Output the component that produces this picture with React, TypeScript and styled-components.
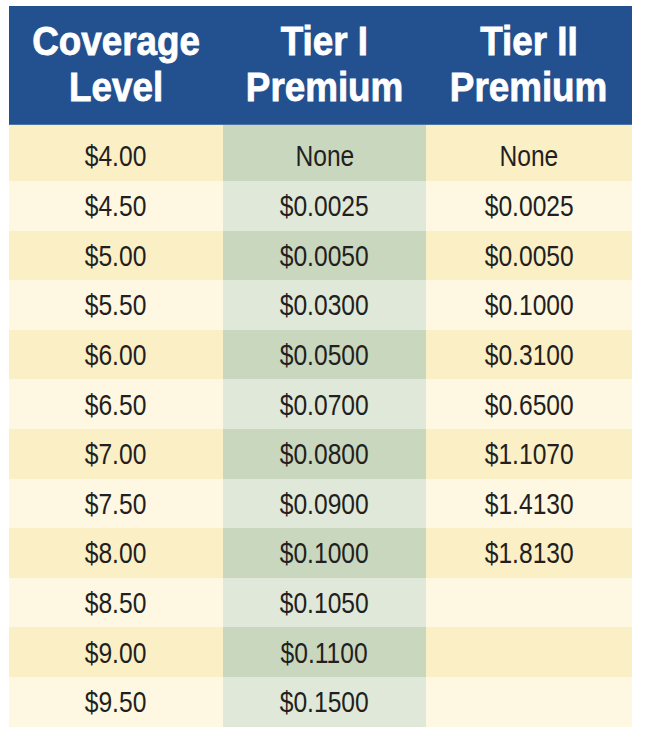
import styled, { createGlobalStyle } from "styled-components";

const GlobalStyle = createGlobalStyle`
	html, body {
		margin: 0;
		padding: 0;
		background: #ffffff;
	}
`;

const Page = styled.div`
	padding: 6px 0 0 9px;
`;

const Table = styled.div`
	width: 623px;
	display: flex;
	flex-direction: column;
	font-family: "Liberation Sans Narrow", "Arial Narrow", "Liberation Sans", sans-serif;
	color: #231f20;
`;

const HeaderRow = styled.div`
	display: grid;
	grid-template-columns: 214px 203px 206px;
	height: 119px;
	background: #23518f;
	border-bottom: 1px solid #4d74a8;
	box-sizing: border-box;
`;

const HeaderCell = styled.div`
	display: flex;
	flex-direction: column;
	align-items: center;
	justify-content: center;
	padding-bottom: 3px;
	color: #ffffff;
	font-weight: bold;
	font-size: 40px;
	line-height: 46px;
	text-align: center;
	-webkit-text-stroke: 0.8px #ffffff;
`;

// no condensed face is installed, so squeeze the regular one
const Condensed = styled.span<{ $squeeze: number }>`
	display: inline-block;
	white-space: nowrap;
	transform: scaleX(${(p) => p.$squeeze});
`;

const Row = styled.div<{ $dark: boolean; $tall: boolean }>`
	display: grid;
	grid-template-columns: 214px 203px 206px;
	height: ${(p) => (p.$tall ? "56px" : "49.6px")};
	background: ${(p) => (p.$dark ? "#fbefc6" : "#fef7e1")};
`;

const Cell = styled.div<{ $dark: boolean; $green?: boolean; $tall: boolean }>`
	display: flex;
	align-items: center;
	justify-content: center;
	padding-top: ${(p) => (p.$tall ? "6px" : "1px")};
	font-size: 30px;
	background: ${(p) =>
		p.$green ? (p.$dark ? "#c9d7bf" : "#e0e9d9") : "transparent"};
`;

const rows: [string, string, string][] = [
	["$4.00", "None", "None"],
	["$4.50", "$0.0025", "$0.0025"],
	["$5.00", "$0.0050", "$0.0050"],
	["$5.50", "$0.0300", "$0.1000"],
	["$6.00", "$0.0500", "$0.3100"],
	["$6.50", "$0.0700", "$0.6500"],
	["$7.00", "$0.0800", "$1.1070"],
	["$7.50", "$0.0900", "$1.4130"],
	["$8.00", "$0.1000", "$1.8130"],
	["$8.50", "$0.1050", ""],
	["$9.00", "$0.1100", ""],
	["$9.50", "$0.1500", ""],
];

const headers: [string, string][] = [
	["Coverage", "Level"],
	["Tier I", "Premium"],
	["Tier II", "Premium"],
];

const App = () => {
	return (
		<>
			<GlobalStyle />
			<Page>
				<Table>
					<HeaderRow>
						{headers.map(([top, bottom]) => (
							<HeaderCell key={top}>
								<Condensed $squeeze={0.92}>{top}</Condensed>
								<Condensed $squeeze={0.92}>{bottom}</Condensed>
							</HeaderCell>
						))}
					</HeaderRow>
					{rows.map(([level, tier1, tier2], i) => {
						const dark = i % 2 === 0;
						const tall = i === 0;
						return (
							<Row key={level} $dark={dark} $tall={tall}>
								<Cell $dark={dark} $tall={tall}>
									<Condensed $squeeze={0.82}>{level}</Condensed>
								</Cell>
								<Cell $dark={dark} $tall={tall} $green>
									<Condensed $squeeze={0.82}>{tier1}</Condensed>
								</Cell>
								<Cell $dark={dark} $tall={tall}>
									<Condensed $squeeze={0.82}>{tier2}</Condensed>
								</Cell>
							</Row>
						);
					})}
				</Table>
			</Page>
		</>
	);
};

export default App;
